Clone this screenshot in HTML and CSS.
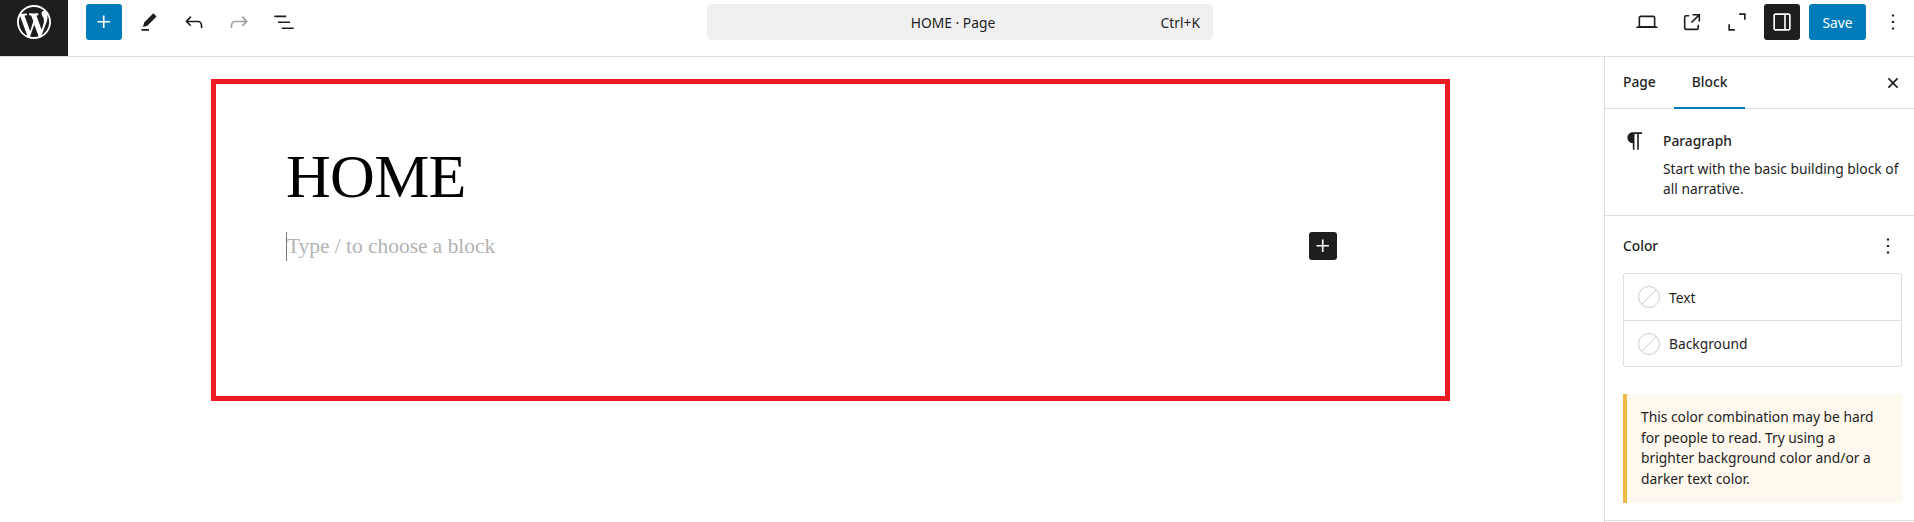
FILE: index.html
```html
<!DOCTYPE html>
<html lang="en">
<head>
  <meta charset="UTF-8" />
  <title>HOME - Page</title>
  <link rel="stylesheet" href="styles.css">
</head>
<body>
  <header class="topbar">
    <div class="top-left">
      <a class="logo">
        <svg width="34" height="34" viewBox="0 0 20 20"><path d="M20 10c0-5.51-4.49-10-10-10C4.48 0 0 4.49 0 10c0 5.52 4.48 10 10 10 5.51 0 10-4.48 10-10zM7.78 15.37L4.37 6.22c.55-.02 1.17-.08 1.17-.08.5-.06.44-1.13-.06-1.11 0 0-1.45.11-2.37.11-.18 0-.37 0-.58-.01C4.12 2.69 6.87 1.11 10 1.11c2.33 0 4.45.87 6.05 2.34-.68-.11-1.65.39-1.65 1.58 0 .74.45 1.36.9 2.1.35.61.55 1.36.55 2.46 0 1.49-1.4 5-1.4 5l-3.03-8.37c.54-.02.82-.17.82-.17.5-.05.44-1.25-.06-1.22 0 0-1.44.12-2.38.12-.87 0-2.33-.12-2.33-.12-.5-.03-.56 1.2-.06 1.22l.92.08 1.26 3.41zM17.41 10c.24-.64.74-1.87.43-4.25.7 1.29 1.05 2.71 1.05 4.25 0 3.29-1.73 6.24-4.4 7.78.97-2.59 1.94-5.2 2.92-7.78zM6.1 18.09C3.12 16.65 1.11 13.53 1.11 10c0-1.3.23-2.48.72-3.59C3.25 10.3 4.67 14.2 6.1 18.09zm4.03-6.63l2.58 6.98c-.86.29-1.76.45-2.71.45-.79 0-1.57-.11-2.29-.33.81-2.38 1.62-4.74 2.42-7.1z"/></svg>
      </a>
      <div class="tools">
        <button class="icon-btn primary"><svg class="icon" viewBox="0 0 24 24"><path d="M11 12.5V17.5H12.5V12.5H17.5V11H12.5V6H11V11H6V12.5H11Z"/></svg></button>
        <button class="icon-btn"><svg class="icon" viewBox="0 0 24 24"><path d="m19 7-3-3-8.5 8.5-1 4 4-1L19 7Zm-7 11.5H5V20h7v-1.5Z"/></svg></button>
        <button class="icon-btn"><svg class="icon" viewBox="0 0 24 24"><path d="M18.3 11.7c-.6-.6-1.4-.9-2.3-.9H6.7l2.9-3.3-1.1-1-4.5 5L8.5 16l1-1-2.7-2.7H16c.5 0 .9.2 1.3.5 1 1 1 3.4 1 4.5v.3h1.5v-.2c0-1.5 0-4.3-1.5-5.7z"/></svg></button>
        <button class="icon-btn disabled"><svg class="icon" viewBox="0 0 24 24"><path d="M15.6 6.5l-1.1 1 2.9 3.3H8c-.9 0-1.7.3-2.3.9-1.4 1.5-1.4 4.2-1.4 5.6v.2h1.5v-.3c0-1.1 0-3.5 1-4.5.3-.3.7-.5 1.3-.5h9.2L14.5 15l1.1 1.1 4.6-4.6-4.6-5z"/></svg></button>
        <button class="icon-btn"><svg class="icon" viewBox="0 0 24 24"><path d="M3 6h11v1.5H3V6Zm3.5 5.5h11V13h-11v-1.5ZM21 17H10v1.5h11V17Z"/></svg></button>
      </div>
    </div>

    <div class="command-bar">
      <span class="command-title">HOME · Page</span>
      <span class="command-key">Ctrl+K</span>
    </div>

    <div class="top-right">
      <button class="icon-btn"><svg class="icon" viewBox="0 0 24 24"><path d="M20.5 16h-.7V8c0-1.1-.9-2-2-2H6.2c-1.1 0-2 .9-2 2v8h-.7c-.8 0-1.5.7-1.5 1.5h20c0-.8-.7-1.5-1.5-1.5zM5.7 8c0-.3.2-.5.5-.5h11.6c.3 0 .5.2.5.5v7.6H5.7V8z"/></svg></button>
      <button class="icon-btn"><svg class="icon" viewBox="0 0 24 24"><path d="M19.5 4.5h-7V6h4.44l-5.97 5.97 1.06 1.06L18 7.06v4.44h1.5v-7Zm-13 1a2 2 0 0 0-2 2v10a2 2 0 0 0 2 2h10a2 2 0 0 0 2-2v-3H17v3a.5.5 0 0 1-.5.5h-10a.5.5 0 0 1-.5-.5v-10a.5.5 0 0 1 .5-.5h3V5.5h-3Z"/></svg></button>
      <button class="icon-btn"><svg class="icon" viewBox="0 0 24 24"><path d="M14 5.5h4.5V10H20V4h-6v1.5ZM4 14v6h6v-1.5H5.5V14H4Z"/></svg></button>
      <button class="icon-btn dark"><svg class="icon" viewBox="0 0 24 24"><path d="M18 4H6c-1.1 0-2 .9-2 2v12c0 1.1.9 2 2 2h12c1.1 0 2-.9 2-2V6c0-1.1-.9-2-2-2zM6 18.5c-.3 0-.5-.2-.5-.5V6c0-.3.2-.5.5-.5h8v13H6zm12.5-.5c0 .3-.2.5-.5.5h-2.5v-13H18c.3 0 .5.2.5.5v12z"/></svg></button>
      <button class="save-btn">Save</button>
      <button class="icon-btn"><svg class="icon" viewBox="0 0 24 24"><path d="M13 19h-2v-2h2v2zm0-6h-2v-2h2v2zm0-6h-2V5h2v2z"/></svg></button>
    </div>
  </header>

  <div class="workspace">
    <main class="canvas">
      <div class="frame">
        <h1 class="page-title">HOME</h1>
        <div class="block-row">
          <p class="placeholder">Type / to choose a block</p>
          <button class="inserter"><svg class="icon" viewBox="0 0 24 24"><path d="M11 12.5V17.5H12.5V12.5H17.5V11H12.5V6H11V11H6V12.5H11Z"/></svg></button>
        </div>
      </div>
    </main>

    <aside class="sidebar">
      <div class="tabs">
        <span class="tab">Page</span>
        <span class="tab active">Block</span>
        <svg class="icon tab-close" viewBox="0 0 24 24"><path d="M12 13.06l3.712 3.713 1.061-1.06L13.061 12l3.712-3.712-1.06-1.06L12 10.938 8.288 7.227l-1.061 1.06L10.939 12l-3.712 3.712 1.06 1.061L12 13.061z"/></svg>
      </div>

      <section class="block-card">
        <svg class="icon card-icon" viewBox="0 0 24 24"><path d="m9.99609 14v-.2251l.00391.0001v6.225h1.5v-14.5h2.5v14.5h1.5v-14.5h3v-1.5h-8.50391c-2.76142 0-5 2.23858-5 5 0 2.7614 2.23858 5 5 5z"/></svg>
        <div>
          <h2 class="card-title">Paragraph</h2>
          <p class="card-desc">Start with the basic building block of all narrative.</p>
        </div>
      </section>

      <section class="color-panel">
        <div class="panel-head">
          <h2 class="panel-title">Color</h2>
          <svg class="icon" viewBox="0 0 24 24"><path d="M13 19h-2v-2h2v2zm0-6h-2v-2h2v2zm0-6h-2V5h2v2z"/></svg>
        </div>
        <div class="color-group">
          <div class="color-row"><span class="swatch"></span>Text</div>
          <div class="color-row"><span class="swatch"></span>Background</div>
        </div>
        <div class="notice">This color combination may be hard for people to read. Try using a brighter background color and/or a darker text color.</div>
      </section>
    </aside>
  </div>
</body>
</html>
```

FILE: styles.css
```css
* { box-sizing: border-box; }
html, body { height: 100%; }
body { margin: 0; height: 522px; overflow: hidden; background: #fff; color: #1e1e1e; font-family: 'Noto Sans', sans-serif; font-size: 13.8px; }
button { border: none; background: none; padding: 0; font: inherit; color: inherit; }
h1, h2, p { margin: 0; }

.icon { width: 26px; height: 26px; fill: currentColor; display: block; }

/* top bar */
.topbar { height: 57px; border-bottom: 1px solid #e0e0e0; display: grid; grid-template-columns: 707px 506px 1fr; }
.top-left { display: flex; }
.logo { width: 68px; height: 56px; background: #1e1e1e; display: flex; justify-content: center; padding-top: 5px; }
.logo svg { fill: #fff; }
.tools { display: flex; gap: 9px; margin: 4px 0 0 18px; }
.icon-btn { width: 36px; height: 36px; border-radius: 3px; display: flex; align-items: center; justify-content: center; }
.icon-btn.primary { background: #007cba; color: #fff; }
.icon-btn.dark { background: #1e1e1e; color: #fff; }
.icon-btn.disabled { color: #a0a0a0; }

.command-bar { height: 36px; margin-top: 4px; border-radius: 4px; background: #f0f0f0; display: flex; align-items: center; justify-content: center; position: relative; padding-right: 14px; }
.command-key { position: absolute; right: 13px; }

.top-right { display: flex; justify-content: flex-end; gap: 9px; padding: 4px 3px 0 0; }
.save-btn { width: 57px; height: 36px; border-radius: 3px; background: #007cba; color: #fff; }

/* editor */
.workspace { display: flex; height: 465px; }
.canvas { flex: 1; padding: 22px 0 0 211px; }
.frame { width: 1239px; height: 322px; border: 5px solid #ed1c24; padding: 57px 108px 0 70px; }
.page-title { font-family: 'Liberation Serif', serif; font-weight: 400; font-size: 62px; line-height: 70px; letter-spacing: -0.7px; color: #000; }
.block-row { display: flex; justify-content: space-between; align-items: flex-start; margin-top: 21px; }
.placeholder { font-family: 'Liberation Serif', serif; font-size: 21.4px; line-height: 29px; color: #b3b3b3; border-left: 1px solid #757575; }
.inserter { width: 28px; height: 28px; border-radius: 3px; background: #1e1e1e; color: #fff; display: flex; align-items: center; justify-content: center; }

/* sidebar */
.sidebar { width: 310px; border-left: 1px solid #e0e0e0; }
.tabs { height: 52px; border-bottom: 1px solid #e0e0e0; display: flex; position: relative; }
.tab { height: 51px; padding: 0 18px; line-height: 50px; font-weight: 500; }
.tab.active { border-bottom: 2px solid #007cba; height: 52px; }
.tab-close { position: absolute; right: 8px; top: 13px; }

.block-card { height: 107px; border-bottom: 1px solid #e0e0e0; display: flex; padding: 14px 12px 0 17px; gap: 15px; }
.card-icon { flex: none; margin-top: 5px; }
.card-title { font-size: inherit; font-weight: 500; line-height: 20px; margin: 8px 0 8px; }
.card-desc { line-height: 20px; }

.color-panel { padding: 0 12px 0 18px; height: 305px; border-bottom: 1px solid #e0e0e0; }
.panel-head { height: 57px; padding-top: 2px; display: flex; align-items: center; justify-content: space-between; margin-right: 1px; }
.panel-title { font-size: inherit; font-weight: 500; }
.color-group { border: 1px solid #e0e0e0; border-radius: 2px; }
.color-row { height: 46px; display: flex; align-items: center; gap: 9px; padding-left: 14px; }
.color-row + .color-row { border-top: 1px solid #e0e0e0; }
.swatch { width: 22px; height: 22px; border-radius: 50%; border: 1px solid #ccc; background: linear-gradient(135deg, transparent 48%, #ccc 48%, #ccc 52%, transparent 52%); }
.notice { margin-top: 27px; height: 109px; padding: 13px 10px 0 14px; background: #fef8ee; border-left: 4px solid #f0b849; line-height: 20.7px; }
```
